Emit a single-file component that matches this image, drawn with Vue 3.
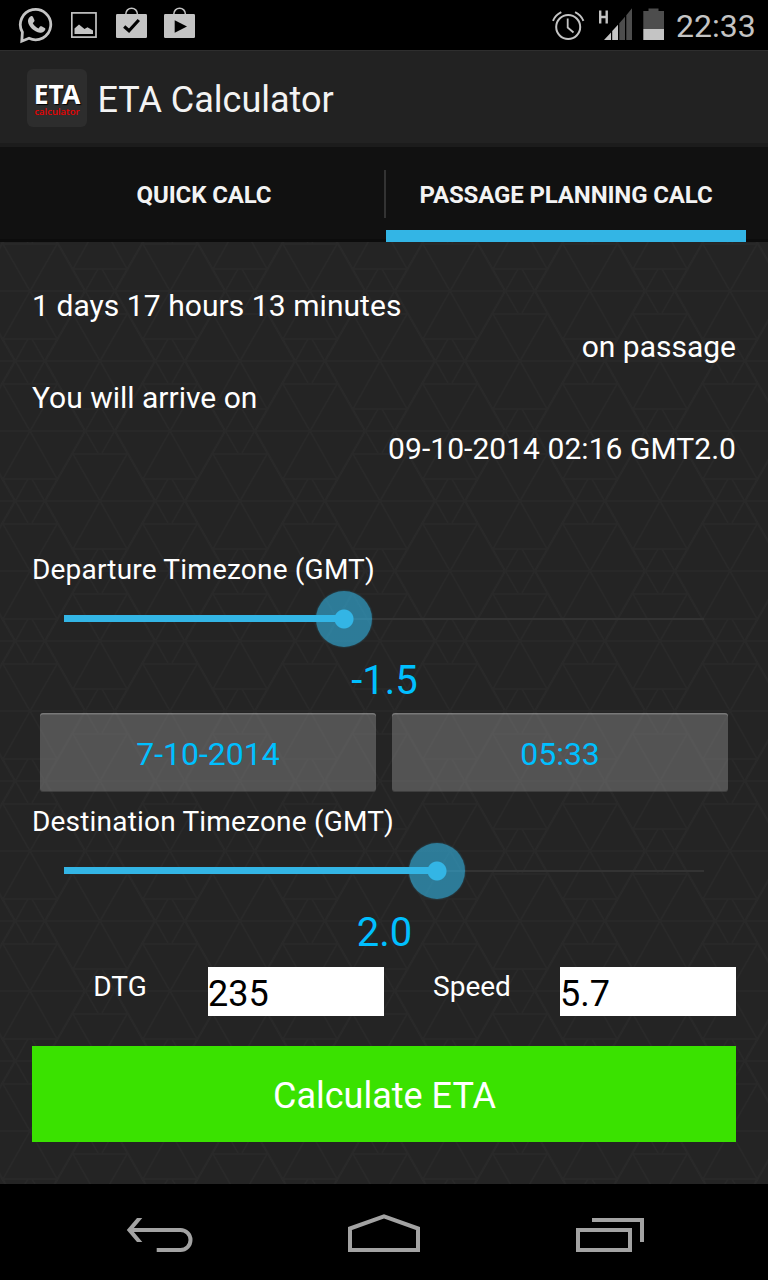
<template>
  <div class="phone">
    <header class="status-bar">
      <div class="status-icons">
        <svg class="icon-chat" width="36" height="50" viewBox="18 0 36 50">
          <path d="M22.4 32.2A15.2 15.2 0 1 1 29 38.3L21.8 41.2Z" fill="none" stroke="#c4c4c4" stroke-width="2.8" />
          <path d="M30.8 16.2c.8-.4 1.7-.2 2.1.6l1.5 3.2c.3.7.1 1.3-.4 1.8l-1.2 1.5c1.4 2.4 3.2 4 5.7 5.1l1.5-1.8c.5-.5 1-.6 1.6-.3l3.1 1.6c.7.4.8 1 .6 1.7-.6 2.2-3 3.5-5.2 3.2-6.4-1-11.5-6-12.1-11.2-.2-2.3.9-4.5 2.8-5.4z" fill="#c4c4c4" />
        </svg>
        <svg class="icon-image" width="26" height="50" viewBox="71 0 26 50">
          <rect x="71.8" y="12.9" width="24.2" height="24.2" fill="none" stroke="#c4c4c4" stroke-width="1.7" />
          <path d="M74.5 34V28.5L79 24.5L84.5 29L87.5 27.3L93 30.5V34Z" fill="#c4c4c4" />
        </svg>
        <svg class="icon-bag" width="32" height="50" viewBox="116 0 32 50">
          <path d="M125.8 15V14a5.8 5.8 0 0 1 11.6 0v1" fill="none" stroke="#c4c4c4" stroke-width="1.5" />
          <rect x="116" y="14" width="31" height="24" rx="1.2" fill="#c4c4c4" />
          <path d="M124.2 26.5l4.8 4.3 9.8-10.8" fill="none" stroke="#000" stroke-width="3.2" />
        </svg>
        <svg class="icon-bag" width="32" height="50" viewBox="116 0 32 50">
          <path d="M125.8 15V14a5.8 5.8 0 0 1 11.6 0v1" fill="none" stroke="#c4c4c4" stroke-width="1.5" />
          <rect x="116" y="14" width="31" height="24" rx="1.2" fill="#c4c4c4" />
          <path d="M126.7 20.2v12.6l12.3-6.3z" fill="#000" />
        </svg>
      </div>
      <div class="status-info">
        <svg width="34" height="50" viewBox="551 0 34 50" fill="none" stroke="#c4c4c4">
          <circle cx="568.2" cy="27" r="12" stroke-width="2" />
          <path d="M567.7 18.5V27.5L573.5 32.5" stroke-width="1.8" />
          <path d="M553 20.8Q555.5 15 561.3 12.2M583.4 20.8Q580.9 15 575.1 12.2" stroke-width="2" />
        </svg>
        <svg width="34" height="50" viewBox="598 0 34 50">
          <path d="M600.2 10.5v13M606.7 10.5v13M600.2 17h6.5" fill="none" stroke="#c4c4c4" stroke-width="2.4" />
          <path d="M604 40L611 32.5V40ZM612.2 31L618 24.8V40H612.2Z" fill="#c4c4c4" />
          <path d="M619.3 23.3L625 16.8V40H619.3ZM626.3 15.2L632 8.3V40H626.3Z" fill="#4d4d4d" />
        </svg>
        <svg class="icon-battery" width="22" height="50" viewBox="643 0 22 50">
          <path d="M643.3 11H648.5V8.5H658.5V11H664V29H643.3Z" fill="#4d4d4d" />
          <path d="M643.3 29H664V40H643.3Z" fill="#c4c4c4" />
        </svg>
        <span class="clock">22:33</span>
      </div>
    </header>

    <div class="action-bar">
      <div class="app-icon">
        <span class="app-icon-name">ETA</span>
        <span class="app-icon-sub">calculator</span>
      </div>
      <h1 class="app-title">ETA Calculator</h1>
    </div>

    <nav class="tabs">
      <button
        v-for="tab in tabs"
        :key="tab"
        class="tab"
        :class="{ active: tab === activeTab }"
        @click="activeTab = tab"
      >
        <span>{{ tab }}</span>
      </button>
    </nav>

    <main class="content">
      <svg class="texture" width="768" height="942">
        <defs>
          <g id="tri-unit">
            <path d="M-70 0H70M0 0L-27 48H27ZM-54.7 0L-2 92M54.7 0L2 92M-2 48L-54.7 140M2 48L54.7 140M0 140L-27 93H27Z" />
          </g>
          <pattern id="triangles" x="100" y="-21" width="140" height="140" patternUnits="userSpaceOnUse">
            <g fill="none" stroke="#292929" stroke-width="1.5">
              <use href="#tri-unit" x="0" y="0" />
              <use href="#tri-unit" x="140" y="0" />
              <use href="#tri-unit" x="70" y="70" />
              <use href="#tri-unit" x="70" y="-70" />
              <use href="#tri-unit" x="0" y="140" />
              <use href="#tri-unit" x="140" y="140" />
            </g>
          </pattern>
        </defs>
        <rect width="768" height="942" fill="url(#triangles)" />
      </svg>

      <section class="result">
        <p class="duration">1 days 17 hours 13 minutes</p>
        <p class="passage">on passage</p>
        <p class="arrive">You will arrive on</p>
        <p class="arrival-date">09-10-2014 02:16 GMT2.0</p>
      </section>

      <section class="zone departure">
        <label class="zone-label">Departure Timezone (GMT)</label>
        <div class="slider">
          <div class="slider-fill" :style="{ width: percent(departureZone) }"></div>
          <div class="slider-thumb" :style="{ left: percent(departureZone) }"></div>
        </div>
        <div class="zone-value">{{ departureZone.toFixed(1) }}</div>
      </section>

      <div class="pickers">
        <button class="picker date">7-10-2014</button>
        <button class="picker time">05:33</button>
      </div>

      <section class="zone destination">
        <label class="zone-label">Destination Timezone (GMT)</label>
        <div class="slider">
          <div class="slider-fill" :style="{ width: percent(destinationZone) }"></div>
          <div class="slider-thumb" :style="{ left: percent(destinationZone) }"></div>
        </div>
        <div class="zone-value">{{ destinationZone.toFixed(1) }}</div>
      </section>

      <div class="fields">
        <label for="dtg">DTG</label>
        <input id="dtg" v-model="dtg" type="text" />
        <label for="speed">Speed</label>
        <input id="speed" v-model="speed" type="text" />
      </div>

      <button class="calculate">Calculate ETA</button>
    </main>

    <footer class="nav-bar">
      <svg width="70" height="96" viewBox="126 1184 70 96" fill="none" stroke="#a3a3a3" stroke-width="4">
        <path d="M129 1230H180.5A10 10 0 0 1 180.5 1250H156.7" />
        <path d="M126.8 1230L137 1218H142.3L132.2 1230L142.3 1242H137Z" fill="#a3a3a3" stroke="none" />
      </svg>
      <svg class="nav-home" width="74" height="96" viewBox="347 1184 74 96" fill="none" stroke="#a3a3a3" stroke-width="4">
        <path d="M350 1250V1228.5L384 1216.3L418 1228.5V1250Z" />
      </svg>
      <svg class="nav-recent" width="70" height="96" viewBox="575 1184 70 96" fill="none" stroke="#a3a3a3" stroke-width="4">
        <path d="M578 1230H630V1250H578Z" />
        <path d="M592 1220H642V1242" />
      </svg>
    </footer>
  </div>
</template>

<script setup>
import { ref } from 'vue'

const tabs = ['QUICK CALC', 'PASSAGE PLANNING CALC']
const activeTab = ref('PASSAGE PLANNING CALC')

const departureZone = ref(-1.5)
const destinationZone = ref(2)
const dtg = ref('235')
const speed = ref('5.7')

// sliders run from GMT-12 to GMT+12
const percent = (zone) => `${((zone + 12) / 24) * 100}%`
</script>

<style>
body {
  margin: 0;
  background: #000;
}
</style>

<style scoped>
.phone {
  width: 768px;
  height: 1280px;
  display: flex;
  flex-direction: column;
  overflow: hidden;
  background: #000;
  color: #fff;
  font-family: Roboto, sans-serif;
}

svg {
  display: block;
  flex-shrink: 0;
}

button {
  border: 0;
  padding: 0;
  font-family: inherit;
}

.status-bar {
  height: 50px;
  display: flex;
  justify-content: space-between;
}

.status-icons {
  display: flex;
  padding-left: 18px;
}

.icon-image {
  margin-left: 17px;
}

.icon-bag {
  margin-left: 19px;
}

.icon-bag + .icon-bag {
  margin-left: 16px;
}

.status-info {
  display: flex;
  gap: 13px;
  padding-right: 12px;
}

.icon-battery {
  margin-left: -2px;
}

.clock {
  margin-left: -2px;
  width: 80px;
  font-size: 32px;
  line-height: 52px;
  color: #c4c4c4;
}

.action-bar {
  box-sizing: border-box;
  height: 97px;
  display: flex;
  align-items: flex-start;
  padding: 18px 0 0 27px;
  background: #222;
  border-top: 1px solid #2e2e2e;
  border-bottom: 4px solid #1c1c1c;
}

.app-icon {
  width: 60px;
  height: 58px;
  border-radius: 6px;
  background: #2d2d2d;
  display: flex;
  flex-direction: column;
  align-items: center;
}

.app-icon-name {
  margin-top: 14px;
  font-family: "Noto Sans", sans-serif;
  font-size: 26.5px;
  font-weight: 700;
  line-height: 22px;
  text-shadow: 1px 1px 1px #000;
}

.app-icon-sub {
  margin-top: 1px;
  font-family: "Noto Sans", sans-serif;
  font-size: 9.6px;
  font-weight: 500;
  line-height: 11px;
  color: #f00000;
}

.app-title {
  margin: 10px 0 0 10.5px;
  font-size: 36px;
  font-weight: 400;
  line-height: 42px;
  color: #f3f3f3;
}

.tabs {
  box-sizing: border-box;
  height: 95px;
  display: flex;
  padding: 0 22px;
  background: #111;
  box-shadow: inset 0 -3px 0 #0c0c0c;
}

.tab {
  flex: 1;
  box-sizing: border-box;
  padding: 1px 0 0 2px;
  background: none;
  font-size: 24px;
  font-weight: 700;
  letter-spacing: -0.13px;
  color: #f3f3f3;
  position: relative;
}

.tab + .tab {
  border-left: 2px solid transparent;
  background-clip: padding-box;
}

.tab + .tab::before {
  content: "";
  position: absolute;
  left: -2px;
  top: 23px;
  width: 2px;
  height: 48px;
  background: #333;
}

.tab.active {
  padding-left: 0;
  background: linear-gradient(#33b5e5, #33b5e5) bottom / 100% 12px no-repeat padding-box;
}

.content {
  position: relative;
  height: 942px;
  box-sizing: border-box;
  padding: 45px 32px 0;
  background: #242424;
}

.texture {
  position: absolute;
  left: 0;
  top: 0;
}

.result,
.zone,
.pickers,
.fields,
.calculate {
  position: relative;
}

.result {
  height: 184px;
  font-size: 30px;
}

.result p {
  margin: 0;
  white-space: nowrap;
}

.duration {
  line-height: 37px;
  letter-spacing: 0.06px;
}

.passage {
  line-height: 45px;
  text-align: right;
}

.arrive {
  line-height: 57px;
}

.arrival-date {
  line-height: 45px;
  text-align: right;
  letter-spacing: 0.05px;
}

.departure {
  margin-top: 78px;
}

.zone-label {
  display: block;
  box-sizing: border-box;
  height: 40px;
  font-size: 28px;
  line-height: 42px;
  letter-spacing: 0.19px;
}

.slider {
  position: relative;
  height: 60px;
  margin: 0 32px;
  background: linear-gradient(#333, #333) center / 100% 2px no-repeat;
}

.slider-fill {
  position: absolute;
  left: 0;
  top: 26px;
  height: 7px;
  background: #33b5e5;
}

.slider-thumb {
  position: absolute;
  top: 2px;
  width: 56px;
  height: 56px;
  margin-left: -28px;
  border-radius: 50%;
  background: radial-gradient(circle, #33b5e5 9px, rgba(51, 181, 229, 0.6) 10px);
  box-shadow: 0 0 2px rgba(51, 181, 229, 0.4);
}

.zone-value {
  height: 62px;
  padding-left: 1px;
  font-size: 40px;
  line-height: 64px;
  text-align: center;
  color: #00bfff;
}

.pickers {
  display: flex;
  gap: 16px;
  margin: 2px 8px 9px;
}

.picker {
  flex: 1;
  height: 79px;
  padding-top: 2px;
  border-radius: 3px;
  background: rgba(135, 135, 135, 0.48);
  box-shadow: inset 0 1.5px 0 rgba(255, 255, 255, 0.22), inset 0 -1px 0 rgba(0, 0, 0, 0.25);
  font-size: 32px;
  color: #00bfff;
}

.fields {
  display: flex;
  height: 49px;
  margin-top: 4px;
}

.fields label {
  width: 176px;
  font-size: 28px;
  line-height: 40px;
  text-align: center;
}

.fields input {
  box-sizing: border-box;
  width: 176px;
  height: 49px;
  padding: 4px 0 0;
  border: 0;
  border-radius: 0;
  background: #fff;
  font-family: inherit;
  font-size: 36px;
  color: #000;
}

.calculate {
  display: block;
  width: 704px;
  height: 96px;
  margin-top: 30px;
  padding: 4px 0 0 1px;
  background: #3ae200;
  font-size: 36px;
  color: #fff;
}

.nav-bar {
  height: 96px;
  display: flex;
  padding-left: 126px;
}

.nav-home {
  margin-left: 151px;
}

.nav-recent {
  margin-left: 154px;
}
</style>
